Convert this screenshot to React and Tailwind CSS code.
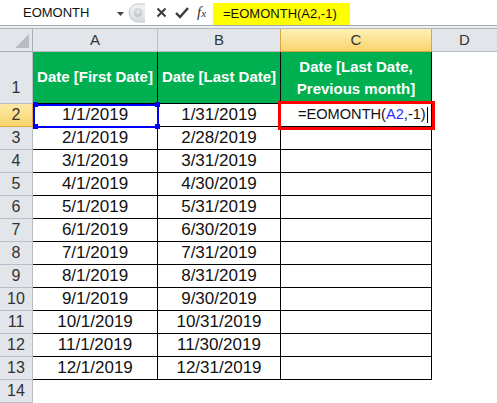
import React from "react";

const A = ["1/1/2019","2/1/2019","3/1/2019","4/1/2019","5/1/2019","6/1/2019","7/1/2019","8/1/2019","9/1/2019","10/1/2019","11/1/2019","12/1/2019"];
const B = ["1/31/2019","2/28/2019","3/31/2019","4/30/2019","5/31/2019","6/30/2019","7/31/2019","8/31/2019","9/30/2019","10/31/2019","11/30/2019","12/31/2019"];

function RowHead({ n, sel, tall }) {
  return (
    <div
      className={
        "w-[33px] shrink-0 flex justify-center text-[16px] text-[#333] border-r border-b " +
        (tall ? "items-end pb-[3px] " : "items-center ") +
        (sel
          ? "bg-gradient-to-b from-[#fde9a6] to-[#f9d46c] border-[#e0a94a]"
          : "bg-[#e2e5e9] border-[#b9bec5]")
      }
    >
      {n}
    </div>
  );
}

export default function App() {
  return (
    <div className="relative w-[497px] h-[403px] overflow-hidden bg-white font-['Liberation_Sans',Arial,sans-serif]">
      {/* formula bar */}
      <div className="flex h-[26px] bg-white border-b border-[#a6abb2]">
        <div className="w-[128px] shrink-0 flex items-center relative">
          <span className="pl-[23px] text-[13px] text-[#111]">EOMONTH</span>
          <svg className="absolute left-[117px] top-[12px]" width="7" height="4" viewBox="0 0 7 4">
            <path d="M0 0 L7 0 L3.5 4 Z" fill="#444" />
          </svg>
        </div>
        <div className="w-[18px] shrink-0 flex items-center">
          <svg width="18" height="20" viewBox="0 0 18 20">
            <defs>
              <linearGradient id="gg" x1="0" y1="0" x2="0" y2="1">
                <stop offset="0" stopColor="#f4f5f7" />
                <stop offset="1" stopColor="#d6d9de" />
              </linearGradient>
              <radialGradient id="dot" cx="0.5" cy="0.4" r="0.6">
                <stop offset="0" stopColor="#f0f0f0" />
                <stop offset="1" stopColor="#b9bcc1" />
              </radialGradient>
            </defs>
            <path d="M17 1 L10 1 A9 9 0 0 0 10 19 L17 19" fill="url(#gg)" stroke="#c3c7cc" strokeWidth="1" />
            <ellipse cx="10" cy="9.5" rx="4" ry="4.2" fill="url(#dot)" />
          </svg>
        </div>
        <div className="w-[67px] shrink-0 flex items-center">
          <svg className="ml-[10px]" width="11" height="11" viewBox="0 0 11 11">
            <path d="M1.5 1.5 L9.5 9.5 M9.5 1.5 L1.5 9.5" stroke="#3a3a3a" strokeWidth="2" />
          </svg>
          <svg className="ml-[8px]" width="14" height="12" viewBox="0 0 14 12">
            <path d="M1 6 L5 10 L13 1" stroke="#3a3a3a" strokeWidth="2.4" fill="none" />
          </svg>
          <span className="ml-[8px] font-['Liberation_Serif',serif] italic text-[15px] text-[#333] leading-none">
            f<span className="text-[11px]">x</span>
          </span>
        </div>
        <div className="mt-[3px] w-[137px] h-[22px] bg-[#ffff00] flex items-center pl-[10px] text-[13px] text-[#111]">
          =EOMONTH(A2,-1)
        </div>
        <div className="flex-1" />
      </div>
      {/* strip */}
      <div className="h-[3px] bg-[#eceef0] border-b border-[#b3b8bf]" />
      {/* column headers */}
      <div className="flex h-[23px] text-[15px] text-[#333]">
        <div className="w-[33px] shrink-0 bg-[#e2e5e9] border-r border-b border-[#a9aeb6] relative">
          <svg className="absolute right-[3px] bottom-[3px]" width="14" height="14" viewBox="0 0 14 14">
            <path d="M14 0 L14 14 L0 14 Z" fill="#b8bcc2" />
          </svg>
        </div>
        <div className="w-[125px] shrink-0 flex items-center justify-center bg-[#e2e5e9] border-r border-b border-[#b9bec5]">A</div>
        <div className="w-[122px] shrink-0 flex items-center justify-center bg-[#e2e5e9] border-b border-[#b9bec5]">B</div>
        <div className="w-[152px] shrink-0 flex items-center justify-center bg-gradient-to-b from-[#fef0b4] to-[#f9d46c] border-x border-b border-[#d9a54c]">C</div>
        <div className="flex-1 flex items-center justify-center bg-[#e2e5e9] border-b border-[#b9bec5]">D</div>
      </div>
      {/* row 1 */}
      <div className="flex h-[52px]">
        <RowHead n={1} tall />
        <div className="w-[125px] shrink-0 bg-[#00b050] border-r border-b border-black flex items-center justify-center text-white font-bold text-[15px]">
          Date [First Date]
        </div>
        <div className="w-[123px] shrink-0 bg-[#00b050] border-r border-b border-black flex items-center justify-center text-white font-bold text-[15px]">
          Date [Last Date]
        </div>
        <div className="w-[151px] shrink-0 bg-[#00b050] border-r border-b border-black flex flex-col items-center justify-center text-white font-bold text-[15px] leading-[22px]">
          <span>Date [Last Date,</span>
          <span>Previous month]</span>
        </div>
        <div className="flex-1" />
      </div>
      {A.map((a, i) => (
        <div key={i} className="flex h-[23px]">
          <RowHead n={i + 2} sel={i === 0} />
          <div className="w-[125px] shrink-0 border-r border-b border-black flex items-center justify-center text-[17px] text-[#111]">
            {a}
          </div>
          <div className="w-[123px] shrink-0 border-r border-b border-black flex items-center justify-center text-[17px] text-[#111]">
            {B[i]}
          </div>
          <div className="w-[151px] shrink-0 border-r border-b border-black flex items-center pl-[17px] text-[14.6px] text-[#111]">
            {i === 0 && (
              <>
                <span>=EOMONTH(</span>
                <span className="text-[#2a2aff]">A2</span>
                <span>,-1)</span>
                <span className="inline-block w-[1px] h-[16px] bg-black ml-[1px]" />
              </>
            )}
          </div>
          <div className="flex-1" />
        </div>
      ))}
      <div className="flex h-[23px]">
        <RowHead n={14} />
        <div className="flex-1" />
      </div>

      {/* A2 range highlight */}
      <div className="absolute left-[33px] top-[104px] w-[126px] h-[24px] border-2 border-[#0000ff]" />
      <div className="absolute left-[33px] top-[102px] w-[5px] h-[5px] bg-[#0000ff]" />
      <div className="absolute left-[155px] top-[102px] w-[5px] h-[5px] bg-[#0000ff]" />
      <div className="absolute left-[33px] top-[124px] w-[5px] h-[5px] bg-[#0000ff]" />
      <div className="absolute left-[155px] top-[124px] w-[5px] h-[5px] bg-[#0000ff]" />

      {/* red box around C2 */}
      <div className="absolute left-[278px] top-[101px] w-[157px] h-[29px] border-[3px] border-[#ff0000]" />
    </div>
  );
}
